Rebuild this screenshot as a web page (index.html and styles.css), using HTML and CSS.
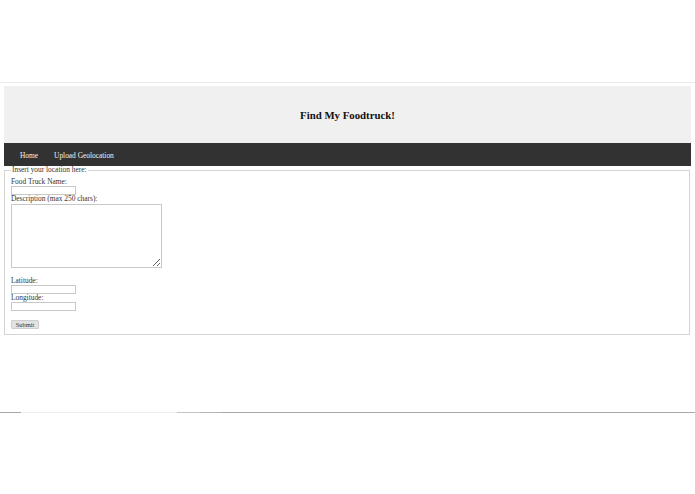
FILE: index.html
```html
<!DOCTYPE html>
<html>
<head>
<meta charset="utf-8">
<link rel="stylesheet" href="styles.css">
</head>
<body>
<div class="top-space"></div>
<div class="top-rule"></div>
<header class="banner">
  <h1 class="title">Find My Foodtruck!</h1>
</header>
<nav class="nav">
  <a class="nav-link" href="#">Home</a>
  <a class="nav-link" href="#">Upload Geolocation</a>
</nav>
<form class="form">
  <fieldset class="box">
    <legend class="legend">Insert your location here:</legend>
    <div class="label">Food Truck Name:</div>
    <input class="field" type="text">
    <div class="label">Description (max 250 chars):</div>
    <textarea class="area"></textarea>
    <div class="label label-gap">Latitude:</div>
    <input class="field" type="text">
    <div class="label">Longitude:</div>
    <input class="field" type="text">
    <button class="submit" type="button">Submit</button>
  </fieldset>
</form>
<div class="bottom-rule">
  <span class="seg seg-a"></span>
  <span class="seg seg-b"></span>
  <span class="seg seg-c"></span>
  <span class="seg seg-d"></span>
  <span class="seg seg-e"></span>
</div>
</body>
</html>
```
FILE: styles.css
```css
html, body {
  margin: 0;
  padding: 0;
  background: #ffffff;
}
body {
  font-family: "Liberation Serif", "Times New Roman", serif;
  font-size: 7.4px;
  color: #222;
  width: 695px;
  height: 494px;
  overflow: hidden;
}
.top-space {
  height: 82px;
}
.top-rule {
  height: 1px;
  background: #ececec;
}
.banner {
  margin: 3px 4px 0 4px;
  height: 57px;
  background: #f0f0f0;
  display: flex;
  align-items: center;
  justify-content: center;
}
.title {
  margin: 0;
  padding-top: 1px;
  font-size: 10.8px;
  font-weight: bold;
  color: #111;
  line-height: 12px;
}
.nav {
  margin: 0 4px;
  height: 23px;
  background: #323232;
  display: flex;
  align-items: center;
  padding-left: 16px;
  gap: 16px;
}
.nav-link {
  color: #f2f2f2;
  text-decoration: none;
  font-size: 7.4px;
  line-height: 8px;
  padding-top: 2px;
}
.form {
  margin: 0;
}
.box {
  margin: 0 5px 0 4px;
  padding: 4px 5px 5px 6px;
  border: 1px solid #d4d4d4;
  min-width: 0;
  display: block;
}
.legend {
  padding: 0 1px;
  margin-left: 0;
  font-size: 7.4px;
  line-height: 8px;
  color: #333;
}
.label {
  line-height: 8px;
  height: 8px;
  color: #333;
}
.label-gap {
  margin-top: 9px;
}
.field {
  display: block;
  box-sizing: border-box;
  width: 65px;
  height: 9px;
  margin: 0;
  padding: 0;
  border: 1px solid #c8c8c8;
  background: #fff;
}
.area {
  display: block;
  box-sizing: border-box;
  width: 151px;
  height: 64px;
  margin: 1px 0 0 0;
  padding: 0;
  border: 1px solid #c8c8c8;
  background: #fff;
}
.submit {
  display: block;
  box-sizing: border-box;
  margin-top: 9px;
  width: 28px;
  height: 9px;
  padding: 0;
  font-family: "Liberation Serif", "Times New Roman", serif;
  font-size: 6.4px;
  line-height: 7px;
  color: #333;
  background: #e2e2e2;
  border: 1px solid #cfcfcf;
  border-radius: 1px;
}
.bottom-rule {
  margin-top: 77px;
  height: 1px;
  display: flex;
}
.seg {
  height: 1px;
}
.seg-a { width: 21px; background: #a8a8a8; }
.seg-b { width: 156px; background: #eeeeee; }
.seg-c { width: 23px; background: #c4c4c4; }
.seg-d { width: 22px; background: #b4b4b4; }
.seg-e { flex: 1; background: #a8a8a8; }
```
